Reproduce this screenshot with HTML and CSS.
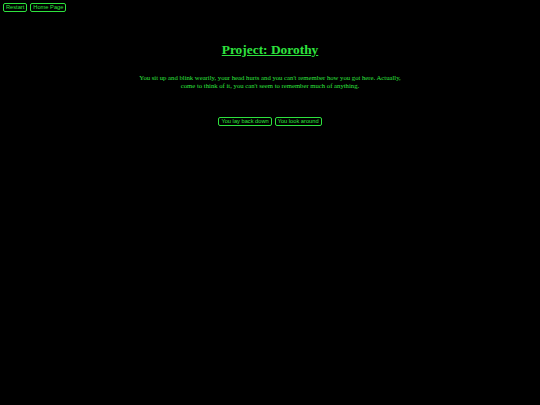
FILE: index.html
```html
<!DOCTYPE html>
<html>
<head>
<meta charset="utf-8">
<link rel="stylesheet" href="styles.css">
</head>
<body>
<div class="topbar">
  <button class="btn">Restart</button>
  <button class="btn">Home Page</button>
</div>
<main class="story">
  <h1 class="title">Project: Dorothy</h1>
  <p class="text">You sit up and blink wearily, your head hurts and you can't remember how you got here. Actually, come to think of it, you can't seem to remember much of anything.</p>
  <div class="choices">
    <button class="btn">You lay back down</button>
    <button class="btn">You look around</button>
  </div>
</main>
</body>
</html>
```
FILE: styles.css
```css
html, body {
  background: #000;
}
body {
  margin: 0;
  padding: 3px;
  color: #2ee23e;
  font-family: "Liberation Serif", serif;
}
.topbar {
  display: flex;
  gap: 3px;
}
.btn {
  background: #000;
  color: #2ee23e;
  border: 1px solid #2ee23e;
  border-radius: 2px;
  font-family: "Liberation Sans", Arial, sans-serif;
  font-size: 5.7px;
  height: 9px;
  padding: 0 2px;
  line-height: 7px;
  margin: 0;
}
.story {
  display: flex;
  flex-direction: column;
  align-items: center;
}
.title {
  font-size: 13.4px;
  font-weight: bold;
  text-decoration: underline;
  margin: 30px 0 0;
  line-height: 15px;
}
.text {
  width: 272px;
  text-align: center;
  font-size: 6.7px;
  line-height: 8px;
  margin: 17px 0 0;
}
.choices {
  display: flex;
  gap: 3px;
  margin-top: 27px;
}
```
